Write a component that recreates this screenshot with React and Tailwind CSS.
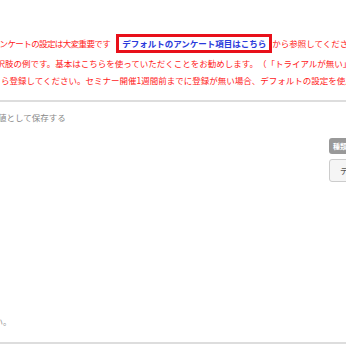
export default function App() {
  return (
    <div className="w-[346px] h-[346px] overflow-hidden bg-white font-['Noto_Sans_CJK_JP',sans-serif] text-[8.5px] [text-spacing-trim:space-all] flex flex-col">
      <div className="h-[100px] flex flex-col pt-[34px] text-[#ff1a1a] whitespace-nowrap">
        <div className="flex items-center h-[19px] ml-[-8px]">
          <span className="tracking-[-0.6px]">アンケートの設定は大変重要です</span>
          <span className="ml-[6px] border-[3px] border-[#e8101a] px-[3px] h-[19px] flex items-center text-[#2a3adb] font-bold">デフォルトのアンケート項目はこちら</span>
          <span>から参照してください。</span>
        </div>
        <div className="h-[18px] flex items-center ml-[-12px] mt-[1px]">選択肢の例です。基本はこちらを使っていただくことをお勧めします。（「トライアルが無い」</div>
        <div className="h-[17px] flex items-center ml-[1px]">ら登録してください。セミナー開催1週間前までに登録が無い場合、デフォルトの設定を使用します。</div>
      </div>
      <div className="border-t-2 border-[#dddddd]" />
      <div className="flex-1 flex whitespace-nowrap">
        <div className="flex-1 flex flex-col">
          <div className="h-[16px] mt-[7px] flex items-center ml-[-2px] text-[#888888]">値として保存する</div>
          <div className="flex-1" />
          <div className="h-[14px] mb-[14px] flex items-center ml-[-14px] text-[#999999]">さい。</div>
        </div>
        <div className="w-[17px] flex flex-col pt-[36px] items-start">
          <div className="h-[16px] w-[30px] rounded-[3px] bg-[#999999] text-white text-[7px] font-bold flex items-center pl-[4px]">種類</div>
          <div className="mt-[5px] h-[23px] w-[40px] rounded-[3px] border border-[#cccccc] bg-[#f5f5f5] text-[#555555] flex items-center pl-[10px]">デフォルト</div>
        </div>
      </div>
      <div className="border-t-2 border-[#dddddd] mb-[2px]" />
    </div>
  );
}
